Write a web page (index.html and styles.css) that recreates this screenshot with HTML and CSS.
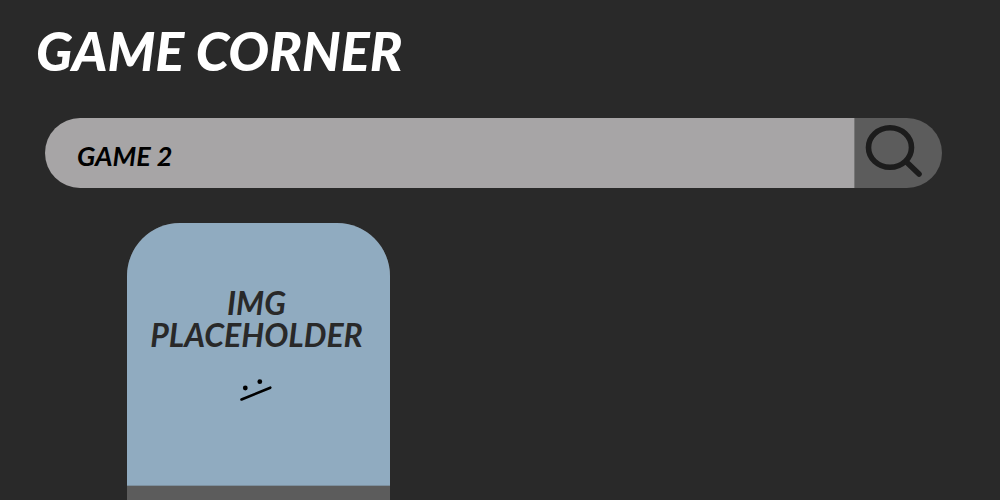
FILE: index.html
```html
<!DOCTYPE html>
<html lang="en">
<head>
<meta charset="utf-8">
<meta name="viewport" content="width=device-width, initial-scale=1">
<title>Game Corner</title>
<link rel="stylesheet" href="styles.css">
</head>
<body>
<header class="header">
  <h1 class="title">GAME CORNER</h1>
</header>
<form class="search" role="search">
  <input class="search-input" type="text" value="GAME 2" aria-label="Search games">
  <button class="search-button" type="button" aria-label="Search">
    <svg class="search-icon" viewBox="0 0 58 56" aria-hidden="true">
      <ellipse cx="25" cy="24.5" rx="21.5" ry="19.8"/>
      <path d="M42 39.5 54 51"/>
    </svg>
  </button>
</form>
<main class="games">
  <article class="card">
    <div class="card-image">
      <p class="card-text">IMG<br>PLACEHOLDER</p>
      <svg class="face" viewBox="0 0 34 24" aria-hidden="true">
        <circle cx="5.3" cy="10" r="2.4"/>
        <circle cx="19.8" cy="3.7" r="2.4"/>
        <path d="M1.5 21.5 30.3 9.7"/>
      </svg>
    </div>
    <div class="card-footer"></div>
  </article>
</main>
</body>
</html>
```
FILE: styles.css
```css
* {
  box-sizing: border-box;
}

body {
  margin: 0;
  min-height: 100vh;
  background: #292929;
  color: #fff;
  font-family: Lato, sans-serif;
  font-style: italic;
}

.header {
  padding: 16px 36px 0;
}

.title {
  margin: 0;
  font-size: 54px;
  line-height: 70px;
  font-weight: 900;
  white-space: nowrap;
}

.search {
  display: flex;
  height: 70px;
  margin: 32px 58px 0 45px;
  border-radius: 35px;
  overflow: hidden;
}

.search-input {
  flex: 1;
  min-width: 0;
  padding: 4px 32px 0;
  border: 0;
  outline: 0;
  background: #a7a5a6;
  color: #000;
  font: inherit;
  font-size: 27px;
  font-weight: 700;
}

.search-button {
  width: 88px;
  padding: 5px 0 0 10px;
  border: 0;
  border-left: 1px solid #777;
  background: #5c5c5c;
  display: flex;
  align-items: flex-start;
}

.search-icon {
  width: 58px;
  height: 56px;
  fill: none;
  stroke: #1c1c1c;
  stroke-width: 5.6;
  stroke-linecap: round;
}

.games {
  display: grid;
  grid-template-columns: repeat(auto-fill, 263px);
  padding: 35px 127px 0;
}

.card {
  border-radius: 53px 53px 0 0;
  overflow: hidden;
  background: #5c5c5c;
}

.card-image {
  display: flex;
  flex-direction: column;
  align-items: center;
  aspect-ratio: 1;
  padding: 64px 4px 0 0;
  background: #90abc0;
  border-bottom: 1px solid #7d909f;
}

.card-text {
  margin: 0;
  color: #292929;
  font-size: 32px;
  line-height: 32px;
  font-weight: 700;
  text-align: center;
}

.face {
  width: 34px;
  height: 24px;
  margin-top: 27px;
  stroke: #000;
  stroke-width: 2.6;
  stroke-linecap: round;
}

.face circle {
  stroke: none;
}

.card-footer {
  height: 14px;
}
```
